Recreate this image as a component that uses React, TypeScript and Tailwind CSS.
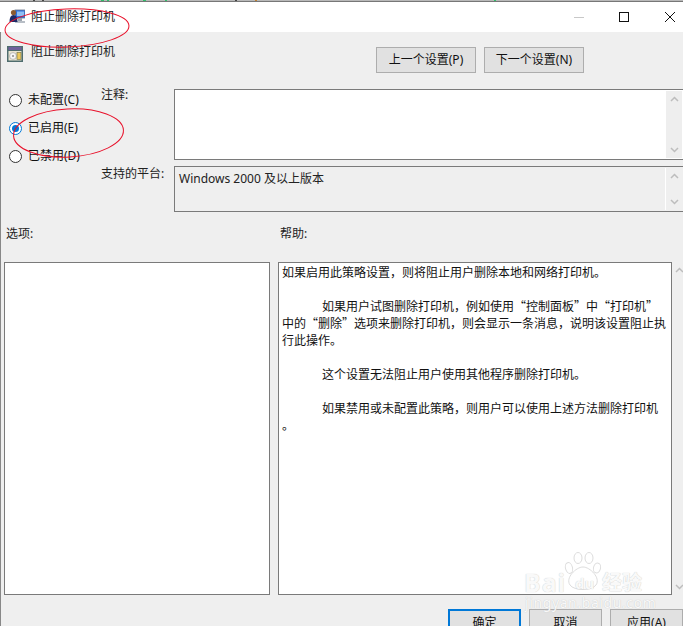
import React from "react";

const font = { fontFamily: '"Noto Sans","Noto Sans CJK SC",sans-serif' };
const cjkFont = { fontFamily: '"Noto Sans CJK SC","Noto Sans",sans-serif' };

function Radio({ label, checked }: { label: string; checked?: boolean }) {
  return (
    <div className="flex h-[28px] items-center gap-[6px] pl-[8px] text-[12px] text-[#111]">
      <span
        className={`flex h-[13px] w-[13px] items-center justify-center rounded-full border bg-white ${
          checked ? "border-[#0078d7]" : "border-[#333]"
        }`}
      >
        {checked && <span className="h-[7px] w-[7px] rounded-full bg-[#0078d7]" />}
      </span>
      <span>{label}</span>
    </div>
  );
}

function Btn({ label, cls }: { label: string; cls: string }) {
  return (
    <div className={`flex shrink-0 items-center justify-center bg-[#e1e1e1] text-[12px] text-[#111] ${cls}`}>{label}</div>
  );
}

function Scroll({ cls }: { cls: string }) {
  return (
    <div className={`flex shrink-0 flex-col items-center justify-between py-[5px] ${cls}`}>
      <svg width="9" height="6" viewBox="0 0 9 6">
        <path d="M1 5 L4.5 1.5 L8 5" fill="none" stroke="#bdbdbd" strokeWidth="1.5" />
      </svg>
      <svg width="9" height="6" viewBox="0 0 9 6">
        <path d="M1 1 L4.5 4.5 L8 1" fill="none" stroke="#bdbdbd" strokeWidth="1.5" />
      </svg>
    </div>
  );
}

function PrinterIcon() {
  return (
    <svg className="shrink-0" width="16" height="16" viewBox="0 0 16 16">
      <rect x="6" y="1" width="10" height="8" fill="#2c6ee0" stroke="#6a7688" strokeWidth="0.8" />
      <rect x="8" y="2.5" width="7" height="4.5" fill="#8fc0f5" />
      <rect x="9" y="9" width="4" height="3" fill="#9aa3ad" />
      <rect x="6" y="12" width="10" height="2" fill="#b8bec6" />
      <circle cx="4.5" cy="3.5" r="2.6" fill="#8a5a30" />
      <path d="M0.5 13 Q0.5 6 4.5 6 Q8.5 6 8.5 13 Z" fill="#1d2a68" />
    </svg>
  );
}

function PolicyIcon() {
  return (
    <svg className="shrink-0" width="16" height="16" viewBox="0 0 16 16">
      <rect x="0" y="0" width="16" height="16" fill="#4f6d6e" />
      <rect x="1.5" y="1" width="13" height="3" fill="#6f5f9a" />
      <rect x="1.5" y="5" width="13" height="9.5" fill="#e8e4d0" />
      <circle cx="6" cy="10" r="3.4" fill="#f6f6f6" stroke="#999" strokeWidth="0.6" />
      <circle cx="6" cy="10" r="1" fill="#8a8a8a" />
      <rect x="10" y="6.5" width="4" height="7" fill="#ecc95c" stroke="#6f6f48" strokeWidth="0.6" />
    </svg>
  );
}

export default function App() {
  return (
    <div style={font} className="relative flex h-[626px] w-[683px] flex-col overflow-hidden bg-[#efefef]">
      {/* Sliver of the window behind the dialog */}
      <svg className="block shrink-0" width="683" height="1" viewBox="0 0 683 1">
        <rect width="683" height="1" fill="#b9b9b9" />
        <rect x="33" width="2" height="1" fill="#444" />
        <rect x="42" width="2" height="1" fill="#444" />
        <rect x="101" width="3" height="1" fill="#2fc06a" />
        <rect x="107" width="2" height="1" fill="#2fc06a" />
        <rect x="143" width="3" height="1" fill="#2fc06a" />
        <rect x="165" width="2" height="1" fill="#2fc06a" />
        <rect x="235" width="2" height="1" fill="#444" />
        <rect x="255" width="2" height="1" fill="#c08030" />
        <rect x="494" width="2" height="1" fill="#2fc06a" />
      </svg>
      <div className="h-[1px] shrink-0 bg-[#777]" />

      {/* Title bar */}
      <div className="flex h-[30px] shrink-0 items-center bg-white pl-[9px] text-[12px] text-[#222]">
        <PrinterIcon />
        <span className="ml-[6px]">阻止删除打印机</span>
        <div className="ml-auto flex items-center pr-[8px]">
          <span className="block h-[1px] w-[10px] bg-[#c8c8c8]" />
          <span className="ml-[35px] block h-[10px] w-[10px] border border-[#111]" />
          <svg className="ml-[36px]" width="10" height="10" viewBox="0 0 10 10">
            <path d="M0 0 L10 10 M10 0 L0 10" stroke="#111" strokeWidth="1" />
          </svg>
        </div>
      </div>

      <div className="flex min-h-0 flex-1 flex-col border-l border-[#888]">
        {/* Heading and nav */}
        <div className="flex h-[57px] shrink-0 items-start">
          <div className="mt-[14px] ml-[6px]">
            <PolicyIcon />
          </div>
          <span className="mt-[11px] ml-[8px] w-[84px] text-[12px] text-[#222]">阻止删除打印机</span>
          <Btn label="上一个设置(P)" cls="ml-[261px] mt-[15px] h-[26px] w-[100px] border border-[#adadad]" />
          <Btn label="下一个设置(N)" cls="ml-[8px] mt-[15px] h-[26px] w-[100px] border border-[#adadad]" />
        </div>

        {/* Radios and info */}
        <div className="flex h-[123px] shrink-0">
          <div className="-mt-[3px] w-[100px] shrink-0">
            <Radio label="未配置(C)" />
            <Radio label="已启用(E)" checked />
            <Radio label="已禁用(D)" />
          </div>
          <div className="flex min-w-0 flex-1 flex-col">
            <div className="flex h-[72px]">
              <span className="-mt-[3px] w-[73px] text-[12px] text-[#222]">注释:</span>
              <div className="flex flex-1 justify-end border-y border-l border-[#7a7a7a] bg-white pr-[1px]">
                <Scroll cls="my-[1px] w-[16px] bg-[#eeeeee]" />
              </div>
            </div>
            <div className="mt-[6px] flex h-[46px]">
              <span className="-mt-[1px] w-[73px] text-[12px] text-[#222]">支持的平台:</span>
              <div className="flex flex-1 border-y border-l border-[#7a7a7a] bg-[#efefef] pr-[1px]">
                <span className="flex-1 pl-[4px] pt-[3px] text-[12px] text-[#222]">Windows 2000 及以上版本</span>
                <Scroll cls="my-[1px] w-[17px] border-l border-white" />
              </div>
            </div>
          </div>
        </div>

        {/* Labels */}
        <div className="flex h-[50px] shrink-0 pt-[13px] text-[12px] text-[#222]">
          <span className="w-[279px] pl-[5px]">选项:</span>
          <span>帮助:</span>
        </div>

        {/* Panels */}
        <div className="flex h-[333px] shrink-0 pl-[3px]">
          <div className="w-[266px] shrink-0 border border-[#7a7a7a] bg-white" />
          <div
            style={cjkFont}
            className="ml-[8px] w-[394px] shrink-0 border border-[#7a7a7a] bg-white pl-[3px] text-[12px] leading-[17px] text-[#111]"
          >
            <p>如果启用此策略设置，则将阻止用户删除本地和网络打印机。</p>
            <p className="mt-[17px] indent-[40px]">
              如果用户试图删除打印机，例如使用“控制面板”中“打印机”
              <br />
              中的“删除”选项来删除打印机，则会显示一条消息，说明该设置阻止执
              <br />
              行此操作。
            </p>
            <p className="mt-[17px] indent-[40px]">这个设置无法阻止用户使用其他程序删除打印机。</p>
            <p className="mt-[17px] indent-[40px]">
              如果禁用或未配置此策略，则用户可以使用上述方法删除打印机
              <br />。
            </p>
          </div>
          <Scroll cls="w-[14px]" />
        </div>

        {/* Footer buttons */}
        <div className="flex shrink-0 justify-end gap-[8px] pt-[14px]">
          <Btn label="确定" cls="h-[26px] w-[73px] border-2 border-[#0078d7] pt-[1px]" />
          <Btn label="取消" cls="h-[26px] w-[73px] border border-[#adadad] pt-[1px]" />
          <Btn label="应用(A)" cls="h-[26px] w-[73px] border border-[#adadad] pt-[1px]" />
        </div>
      </div>

      {/* Hand drawn red annotations */}
      <svg className="pointer-events-none absolute top-0 left-0" width="683" height="626" viewBox="0 0 683 626">
        <ellipse cx="67" cy="28" rx="62" ry="19" fill="none" stroke="#e8102a" strokeWidth="1" transform="rotate(-2 67 28)" />
        <ellipse cx="68.5" cy="133" rx="55" ry="24" fill="none" stroke="#e8102a" strokeWidth="1" transform="rotate(-3 68 133)" />
      </svg>

      {/* Watermark */}
      <div className="pointer-events-none absolute top-[552px] left-[522px] h-[60px] w-[130px] text-[#f9f9f9] [text-shadow:0_0_1px_#bdbdbd]">
        <svg className="absolute top-0 left-[42px]" width="40" height="40" viewBox="0 0 40 40">
          <g fill="#ffffff" fillOpacity="0.55" stroke="#dddddd">
            <ellipse cx="5" cy="16" rx="3.5" ry="5.5" transform="rotate(-15 5 16)" />
            <ellipse cx="14" cy="6" rx="4" ry="5.5" />
            <ellipse cx="25" cy="6" rx="4" ry="5.5" />
            <ellipse cx="33" cy="16" rx="3.5" ry="5" transform="rotate(15 33 16)" />
            <path d="M19 15 C26 15 37 26 32 33 C28 39 10 39 6 33 C1 26 12 15 19 15 Z" />
          </g>
        </svg>
        <span className="absolute top-[18px] left-[2px] text-[25px] leading-[24px] font-bold tracking-[1px]">Bai</span>
        <span className="absolute top-[23px] left-[53px] text-[15px] leading-[16px] font-bold">du</span>
        <span className="absolute top-[21px] left-[80px] text-[20px] leading-[20px] font-bold">经验</span>
        <span className="absolute top-[44px] left-[3px] text-[14px] leading-[14px] tracking-[0.6px]">jingyan.baidu.com</span>
      </div>
    </div>
  );
}
